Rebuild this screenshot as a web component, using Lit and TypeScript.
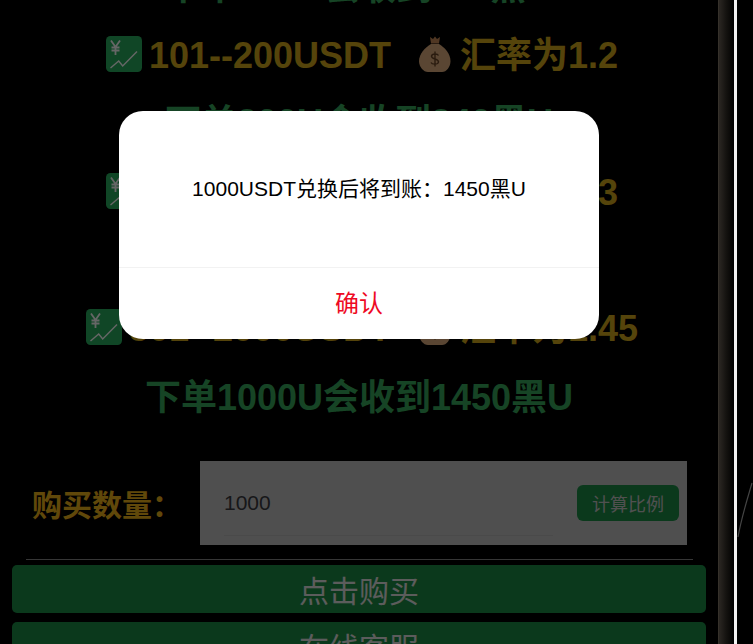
import { LitElement, html, css } from "lit";
import { customElement } from "lit/decorators.js";

const chart = html`<svg class="ico" viewBox="0 0 36 36" aria-hidden="true">
  <rect width="36" height="36" rx="4.500" fill="#2ab060"/>
  <path d="M5 4.500 9.500 11 14 4.500M9.500 11v8M5.500 11.500h8M5.500 14.500h8" fill="none" stroke="#fff" stroke-width="1.800"/>
  <path d="M4.500 32 12.700 25 16.700 30 31 15.500" fill="none" stroke="#fff" stroke-width="1.400"/>
</svg>`;

const bag = html`<svg class="ico" viewBox="0 0 36 36" aria-hidden="true">
  <path d="M13 1 16 3 18 .5 20 3 23 1 22 7.500H14Z" fill="#c88a58"/>
  <path d="M14 8H22C28 11.500 33.500 18 33.500 25 33.500 31 29.500 36 25 36H11C6.500 36 2 31 2 25 2 18 8 11.500 14 8Z" fill="#e0b080"/>
  <path d="M21.500 19.500c-1-2-6.500-2-7 .5-.5 3.500 7.500 2.500 7 6-.5 2.800-6.500 2.800-7.500.5M18 15.500v15" fill="none" stroke="#6a4526" stroke-width="1.400"/>
</svg>`;

@customElement("app-root")
export class AppRoot extends LitElement {
  static styles = css`
    :host {
      display: grid;
      grid-template-columns: 718px 16px 3px 16px;
      height: 644px;
      overflow: hidden;
      background: #000;
      font-family: "Liberation Sans", "Noto Sans CJK SC", sans-serif;
    }
    .main { position: relative; height: 644px; overflow: hidden; background: #000; }
    .content { margin-top: -46px; display: flex; flex-direction: column; }
    .row {
      height: 68.25px;
      line-height: 68.25px;
      text-align: center;
      font-size: 36px; font-weight: 700; white-space: pre;
    }
    .gold { color: #d4aa1c; padding-left: 6px; }
    .green { color: #38aa5e; }
    .green + .gold { margin-top: 0; }
    .raised { margin-top: -2px; margin-bottom: 2px; }
    .ico { display: inline-block; width: 36px; height: 36px; vertical-align: -4px; }
    .gap { display: inline-block; width: 7px; }
    .wide { display: inline-block; width: 26px; }
    .buy { display: flex; align-items: center; margin-top: 29px; height: 84px; padding-left: 32px; }
    .label { width: 168px; font-size: 30px; font-weight: 700; color: #f0b31a; }
    .field { width: 487px; height: 84px; box-sizing: border-box; background: #c6c6c6; padding: 0 8px 0 24px; display: flex; align-items: center; justify-content: space-between; }
    .val { align-self: flex-start; width: 329px; height: 74px; line-height: 84px; font-size: 21px; color: #3a3a40; border-bottom: 1px solid rgba(0,0,0,.06); }
    .calc { width: 102px; height: 36px; display: flex; align-items: center; justify-content: center; background: #1c8f48; color: #c8c8c8; font-size: 18px; border-radius: 6px; }
    hr { margin: 14px 25px 5px 26px; border: 0; border-top: 1px solid #888; }
    .btn { margin: 0 12px 9px; height: 48px; border-radius: 5px; background: #1c8f48; color: #e6e6e6; font-size: 30px; display: flex; align-items: center; justify-content: center; }
    .overlay { position: absolute; inset: 0; background: rgba(0,0,0,.6); display: flex; justify-content: center; padding-top: 111px; box-sizing: border-box; }
    .modal { width: 480px; height: 228px; background: #fff; border-radius: 24px; display: flex; flex-direction: column; overflow: hidden; }
    .msg { height: 157px; box-sizing: border-box; padding-bottom: 5px; display: flex; align-items: center; justify-content: center; font-size: 21px; color: #000; border-bottom: 1px solid #f2f2f2; }
    .ok { flex: 1; padding-bottom: 4px; display: flex; align-items: center; justify-content: center; font-size: 24px; color: #ee0a24; }
    .rail { background: linear-gradient(90deg, #3d3830 0, #2a2622 8%, #151310 50%, #000 100%); }
    .strip { background: #f2f2f2; }
    .pic { background: #000; }
    .pic svg { display: block; width: 16px; height: 644px; }
  `;

  private rate(a: string, b: string) {
    return html`<div class="row gold">${chart}<span class="gap"></span>${a}<span class="wide"></span>${bag}<span class="gap"></span>${b}</div>`;
  }
  private note(t: string, extra = "") {
    return html`<div class="row green ${extra}">${t}</div>`;
  }

  render() {
    return html`
      <div class="main">
        <div class="content">
          ${this.note("下单100U会收到110黑U")}
          ${this.rate("101--200USDT", "汇率为1.2")}
          ${this.note("下单200U会收到240黑U", "raised")}
          ${this.rate("201--500USDT", "汇率为1.3")}
          ${this.note("下单500U会收到650黑U")}
          ${this.rate("501--2000USDT", "汇率为1.45")}
          ${this.note("下单1000U会收到1450黑U")}
          <div class="buy">
            <div class="label">购买数量：</div>
            <div class="field"><span class="val">1000</span><span class="calc">计算比例</span></div>
          </div>
          <hr />
          <div class="btn">点击购买</div>
          <div class="btn">在线客服</div>
        </div>
        <div class="overlay">
          <div class="modal">
            <div class="msg">1000USDT兑换后将到账：1450黑U</div>
            <div class="ok">确认</div>
          </div>
        </div>
      </div>
      <div class="rail"></div>
      <div class="strip"></div>
      <div class="pic"><svg viewBox="0 0 16 644"><path d="M15 483C11 497 5 515 1 537" fill="none" stroke="#444" stroke-width="1.200"/></svg></div>
    `;
  }
}
